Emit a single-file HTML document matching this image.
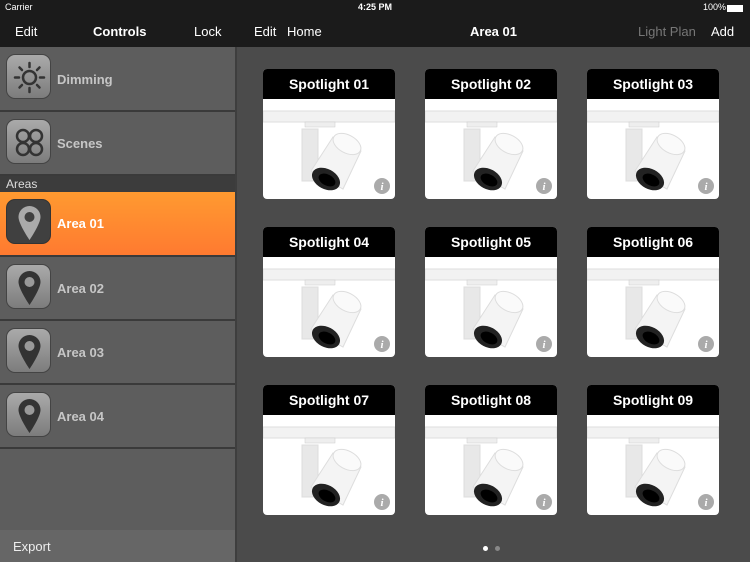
<!DOCTYPE html>
<html><head><meta charset="utf-8"><style>
*{margin:0;padding:0;box-sizing:border-box}
body{width:750px;height:562px;overflow:hidden;background:#4b4b4b;font-family:"Liberation Sans",sans-serif;position:relative}
.top{position:absolute;left:0;top:0;width:750px;height:47px;background:#1b1b1b}
.t{position:absolute;color:#fff;font-size:13px}
.side{position:absolute;left:0;top:47px;width:235px;height:515px;background:#5d5d5d}
.sep{position:absolute;left:235px;top:47px;width:2px;height:515px;background:#3e3e3e}
.row{position:absolute;left:0;width:235px;height:63px;border-bottom:2px solid #3a3a3a}
.ic{position:absolute;left:6px;top:7px;width:45px;height:45px;border-radius:9px;background:linear-gradient(#aaa,#7c7c7c);border:1px solid #444}
.lb{position:absolute;left:57px;top:24px;font-size:13px;font-weight:bold;color:#c6c6c6}
.card{position:absolute;width:132px;height:130px;background:#fff;border-radius:4px;overflow:hidden}
.card .h{height:30px;background:#000;color:#fff;font-size:14px;font-weight:bold;text-align:center;line-height:30px}
</style></head><body>
<div class="top"></div>
<div class="t" style="left:5px;top:2px;font-size:9px">Carrier</div>
<div class="t" style="left:358px;top:2px;font-size:9px;font-weight:bold">4:25 PM</div>
<div class="t" style="left:703px;top:2px;font-size:9px">100%</div>
<div style="position:absolute;left:727px;top:5px;width:16px;height:7px;background:#fff"></div>
<div class="t" style="left:15px;top:24px">Edit</div>
<div class="t" style="left:93px;top:24px;font-weight:bold">Controls</div>
<div class="t" style="left:194px;top:24px">Lock</div>
<div class="t" style="left:254px;top:24px">Edit</div>
<div class="t" style="left:287px;top:24px">Home</div>
<div class="t" style="left:470px;top:24px;font-weight:bold">Area 01</div>
<div class="t" style="left:638px;top:24px;color:#777">Light Plan</div>
<div class="t" style="left:711px;top:24px">Add</div>

<div class="side"></div>
<div class="sep"></div>
<div class="row" style="top:47px;height:65px"><div class="ic"><svg width="45" height="45" viewBox="0 0 45 45"><circle cx="22.5" cy="22.5" r="6.5" fill="none" stroke="#333" stroke-width="2.5"/><g stroke="#333" stroke-width="2.5" stroke-linecap="round"><path d="M22.5 8v4M22.5 33v4M8 22.5h4M33 22.5h4M12.5 12.5l2.5 2.5M30 30l2.5 2.5M12.5 32.5l2.5-2.5M30 15l2.5-2.5"/></g></svg></div><div class="lb" style="top:25px">Dimming</div></div>
<div class="row" style="top:112px;height:64px"><div class="ic"><svg width="45" height="45" viewBox="0 0 45 45" fill="none" stroke="#333" stroke-width="2.5"><circle cx="16" cy="16" r="6"/><circle cx="29" cy="16" r="6"/><circle cx="16" cy="29" r="6"/><circle cx="29" cy="29" r="6"/></svg></div><div class="lb">Scenes</div></div>
<div style="position:absolute;left:0;top:176px;width:235px;height:16px;background:#3c3c3c;color:#ddd;font-size:12px;padding-left:6px;line-height:16px">Areas</div>
<div class="row" style="top:192px;height:65px;background:linear-gradient(#ff9a30,#ff7a30)"><div class="ic" style="background:#404040;border-color:#333"><svg width="45" height="45" viewBox="0 0 45 45"><path d="M22.5 6a11 11 0 0 0-11 11c0 7 11 23 11 23s11-16 11-23a11 11 0 0 0-11-11z" fill="#aaa"/><circle cx="22.5" cy="17" r="5" fill="#404040"/></svg></div><div class="lb" style="color:#fff">Area 01</div></div>
<div class="row" style="top:257px;height:64px"><div class="ic"><svg width="45" height="45" viewBox="0 0 45 45"><path d="M22.5 6a11 11 0 0 0-11 11c0 7 11 23 11 23s11-16 11-23a11 11 0 0 0-11-11z" fill="#333"/><circle cx="22.5" cy="17" r="5" fill="#999"/></svg></div><div class="lb">Area 02</div></div>
<div class="row" style="top:321px;height:64px"><div class="ic"><svg width="45" height="45" viewBox="0 0 45 45"><path d="M22.5 6a11 11 0 0 0-11 11c0 7 11 23 11 23s11-16 11-23a11 11 0 0 0-11-11z" fill="#333"/><circle cx="22.5" cy="17" r="5" fill="#999"/></svg></div><div class="lb">Area 03</div></div>
<div class="row" style="top:385px;height:64px"><div class="ic"><svg width="45" height="45" viewBox="0 0 45 45"><path d="M22.5 6a11 11 0 0 0-11 11c0 7 11 23 11 23s11-16 11-23a11 11 0 0 0-11-11z" fill="#333"/><circle cx="22.5" cy="17" r="5" fill="#999"/></svg></div><div class="lb">Area 04</div></div>
<div style="position:absolute;left:0;top:530px;width:235px;height:32px;background:#666;color:#eee;font-size:13px;padding:9px 0 0 13px">Export</div>

<div id="g"></div>
<div style="position:absolute;left:483px;top:546px;width:5px;height:5px;border-radius:50%;background:#fff"></div>
<div style="position:absolute;left:495px;top:546px;width:5px;height:5px;border-radius:50%;background:#888"></div>
<script>
var s='';var n=1;
for(var r=0;r<3;r++)for(var c=0;c<3;c++){
var x=263+c*162,y=69+r*158;
s+='<div class="card" style="left:'+x+'px;top:'+y+'px"><div class="h">Spotlight 0'+n+'</div><svg width="132" height="100" viewBox="0 30 132 100" style="display:block"><rect x="0" y="42" width="132" height="11" fill="#f2f2f2" stroke="#ddd"/><rect x="42" y="53" width="30" height="5" fill="#eee" stroke="#ccc" stroke-width=".5"/><rect x="39" y="60" width="16" height="52" fill="#e8e8e8" stroke="#ddd"/><path d="M70 68 L98 82 L80 120 L48 102 Z" fill="#f4f4f4" stroke="#ddd"/><ellipse cx="84" cy="75" rx="15" ry="9" transform="rotate(28 84 75)" fill="#fafafa" stroke="#ddd"/><ellipse cx="63" cy="110" rx="15" ry="10" transform="rotate(28 63 110)" fill="#222"/><ellipse cx="64" cy="111" rx="9" ry="5.5" transform="rotate(28 64 111)" fill="#000"/><circle cx="119" cy="117" r="8" fill="#aaa"/><text x="119" y="121" font-size="11" font-style="italic" font-weight="bold" fill="#fff" text-anchor="middle" font-family="Liberation Serif">i</text></svg></div>';n++;}
document.getElementById('g').innerHTML=s;
</script>
</body></html>
